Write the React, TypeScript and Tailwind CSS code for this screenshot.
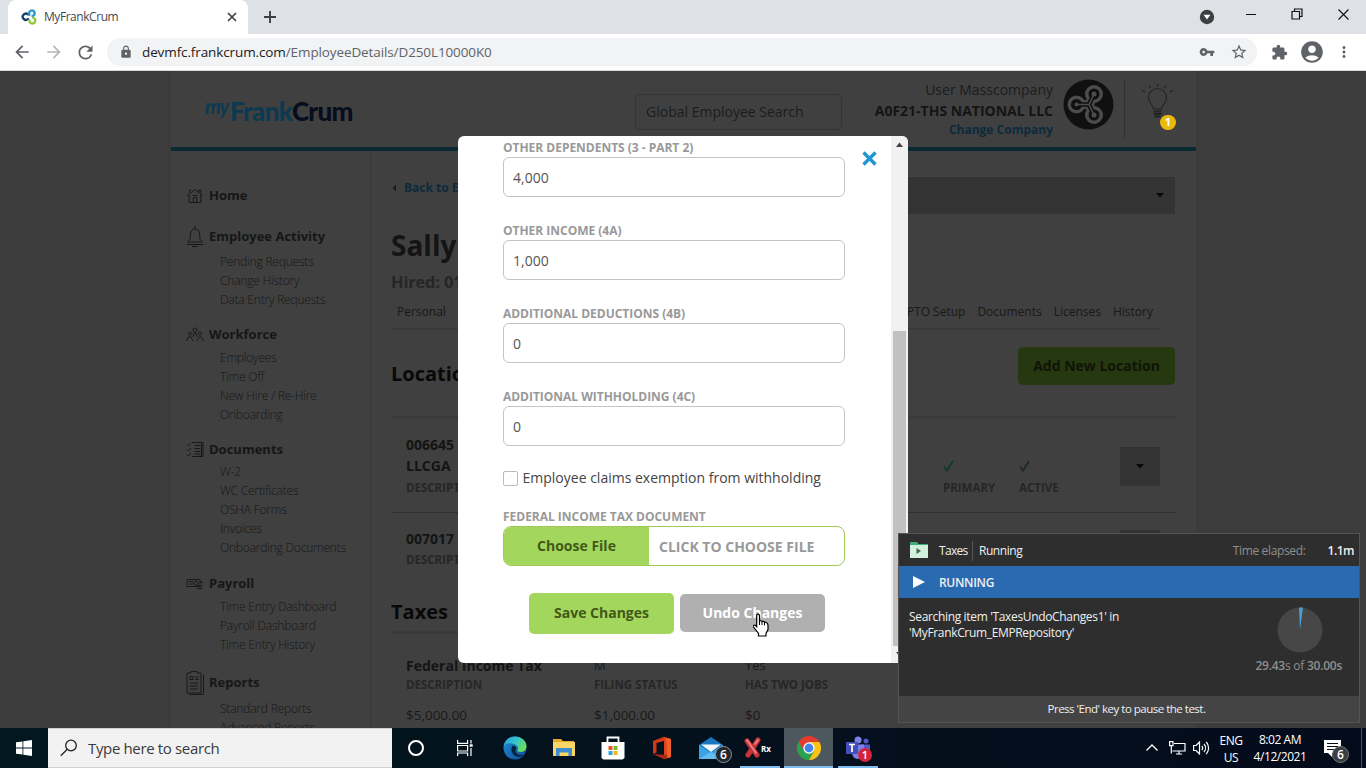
import React from "react";
import {
  MdArrowBack,
  MdArrowForward,
  MdRefresh,
  MdLock,
  MdVpnKey,
  MdStarBorder,
  MdExtension,
  MdAccountCircle,
  MdMoreVert,
} from "react-icons/md";

const sans = "font-['Open_Sans','Noto_Sans',sans-serif]";

function TrefoilLogo({ size, a, b, c }: { size: number; a: string; b: string; c: string }) {
  return (
    <svg width={size} height={size} viewBox="0 0 32 32" fill="none" strokeWidth="4.6" strokeLinecap="round">
      <path d="M14 11 A6.2 6.2 0 1 0 14 20" stroke={a} />
      <path d="M17 11.5 A5.6 5.6 0 1 1 23 14" stroke={b} />
      <path d="M24 17.5 A5.8 5.8 0 1 1 17 23.500" stroke={c} />
    </svg>
  );
}

function TabStrip() {
  return (
    <div className="flex h-[34px] bg-[#dee1e6]">
      <div className="ml-2 flex h-[34px] w-[240px] items-center rounded-t-lg bg-white pr-2">
        <div className="ml-[13px] w-[16px]">
          <TrefoilLogo size={16} a="#17406d" b="#2596d1" c="#8fc93f" />
        </div>
        <span className="ml-[7px] flex-1 text-[12px] tracking-[-0.45px] text-[#45494d]">MyFrankCrum</span>
        <svg width="16" height="16" viewBox="0 0 16 16" stroke="#3c4043" strokeWidth="1.7">
          <path d="M4 4l8 8M12 4l-8 8" />
        </svg>
      </div>
      <svg className="ml-[14px] mt-[9px]" width="16" height="16" viewBox="0 0 16 16" stroke="#3c4043" strokeWidth="1.9">
        <path d="M8 2v12M2 8h12" />
      </svg>
      <div className="flex-1" />
      <svg className="mr-[30px] mt-[9px]" width="16" height="16" viewBox="0 0 16 16">
        <circle cx="8" cy="8" r="7.2" fill="#3c4043" />
        <path d="M4.6 5.8h6.8L8 10.6z" fill="#fff" />
      </svg>
      <svg className="mr-[34px] mt-[9px]" width="12" height="12" viewBox="0 0 12 12" stroke="#111" strokeWidth="1">
        <path d="M1 5.5h10" />
      </svg>
      <svg className="mr-[34px] mt-[8px]" width="12" height="12" viewBox="0 0 12 12" stroke="#111" fill="none" strokeWidth="1.2">
        <path d="M1 3.5h7.5V11H1zM3.5 3.5V1H11v7.5H8.5" />
      </svg>
      <svg className="mr-[16px] mt-[8px]" width="13" height="13" viewBox="0 0 13 13" stroke="#111" strokeWidth="1.1">
        <path d="M1.5 1.5l10 10M11.5 1.5l-10 10" />
      </svg>
    </div>
  );
}

function Toolbar() {
  return (
    <div className="flex h-[37px] items-center border-b border-[#d6d8da] bg-white text-[#5f6368]">
      <MdArrowBack className="ml-[12px]" size={20} />
      <MdArrowForward className="ml-[12px] text-[#b4b7ba]" size={20} />
      <MdRefresh className="ml-[11px]" size={21} />
      <div className="ml-[11px] flex h-7 w-[1150px] items-center rounded-full bg-[#f1f3f4]">
        <MdLock className="ml-[12px]" size={14} />
        <span className="ml-[9px] flex-1 text-[13.500px] tracking-[-0.11px]">
          <span className="text-[#202124]">devmfc.frankcrum.com</span>/EmployeeDetails/D250L10000K0
        </span>
        <MdVpnKey className="mr-[15px]" size={16} />
        <MdStarBorder className="mr-[9px]" size={18} />
      </div>
      <MdExtension className="ml-[14px]" size={17} />
      <MdAccountCircle className="ml-[11px]" size={26} />
      <MdMoreVert className="ml-[10px]" size={18} />
    </div>
  );
}

type Group = { title: string; icon: string; space: string; gap: string; links: string[] };

const groups: Group[] = [
  { title: "Home", icon: "home", space: "mt-[33px]", gap: "", links: [] },
  {
    title: "Employee Activity",
    icon: "bell",
    space: "mt-[17px]",
    gap: "pt-[3px]",
    links: ["Pending Requests", "Change History", "Data Entry Requests"],
  },
  {
    title: "Workforce",
    icon: "people",
    space: "mt-[14px]",
    gap: "pt-px",
    links: ["Employees", "Time Off", "New Hire / Re-Hire", "Onboarding"],
  },
  {
    title: "Documents",
    icon: "docs",
    space: "mt-[14px]",
    gap: "",
    links: ["W-2", "WC Certificates", "OSHA Forms", "Invoices", "Onboarding Documents"],
  },
  {
    title: "Payroll",
    icon: "money",
    space: "mt-[15px]",
    gap: "pt-px",
    links: ["Time Entry Dashboard", "Payroll Dashboard", "Time Entry History"],
  },
  { title: "Reports", icon: "clipboard", space: "mt-[17px]", gap: "pt-[4px]", links: ["Standard Reports", "Advanced Reports"] },
];

const navPaths: Record<string, string> = {
  home: "M1 10L9 3.5l8 6.5M3.2 9v7.500h11.6V9M3.500 6.500V4h2M13 6V4h2v3.6M7.3 16v-4.5h3.4V16M6.5 9.5h5",
  bell: "M9 -1v3M9 2C5.500 2 4.500 5 4.400 8.500c-.1 3.500-1 5-2.900 6.500h15c-1.900-1.500-2.800-3-2.900-6.500C13.500 5 12.500 2 9 2zM0.500 17.500h17M6 19.500h6",
  people: "M9 3a2 2 0 1 0 .01 0M4 7a1.600 1.600 0 1 0 .01 0M14 7a1.600 1.600 0 1 0 .01 0M0.500 16l2-4h2.500l2 4M7 12l1-4h2l1 4M11 16l2-4h2.500l2 4",
  docs: "M6 2.500h11v14H6M8.500 5.500h6M8.500 8.500h6M8.500 11.500h6M8.500 14h6M1 4.500l1.500 1.500L5 3M1 9.500l1.500 1.500L5 8M1 14.500l1.500 1.500L5 13M15.500 3v13",
  money: "M1 5.500h13v7H1zM3 7.500h4M3 10h4M10 7a2 2 0 1 0 .01 0M11 11l4 2 2-2M14 7.500l3 1.500M11 14.500h5",
  clipboard: "M1 0h4V-1.500h6V0h4v20H1zM4 3.500h3v3H4zM9 4h4M9 6.500h4M4 10h8M4 13h8M4 16h8M17.500 1.500v20H3",
};

function NavIcon({ name }: { name: string }) {
  return (
    <svg className="overflow-visible" width="18" height="20" viewBox="0 0 18 20" fill="none" stroke="#181818" strokeWidth="1">
      <path d={navPaths[name]} />
    </svg>
  );
}

function Sidebar() {
  return (
    <div className="h-full w-[200px] border-r border-[#393939] pl-[15px]">
      {groups.map((g) => (
        <div key={g.title} className={g.space}>
          <div className="flex h-6 items-center">
            <NavIcon name={g.icon} />
            <span className="ml-[5px] text-[13px] font-bold text-[#161616]">{g.title}</span>
          </div>
          <div className={g.gap}>
            {g.links.map((l) => (
              <div key={l} className="h-[19px] pl-[34px] text-[12px] leading-[19px] font-light tracking-[-0.2px] whitespace-nowrap text-[#161616]">
                {l}
              </div>
            ))}
          </div>
        </div>
      ))}
    </div>
  );
}

function SiteHeader() {
  return (
    <div className="flex h-[80px] border-b-4 border-[#0b2a33]">
      <div className="flex w-[464px] pl-[34px]">
        <div className="mt-[20px] flex h-[40px] items-center whitespace-nowrap">
          <span className="-mt-[11px] w-[25px] font-['Lato',sans-serif] text-[20px] font-bold italic tracking-[-1px] text-[#0b3a52]">my</span>
          <span className="font-['Lato',sans-serif] text-[26px] font-black tracking-[-0.65px] text-[#0b3a52]">
            Frank<span className="text-[#060d1c]">Crum</span>
          </span>
        </div>
      </div>
      <div className="mt-[23px] h-[36px] w-[207px] rounded-[4px] border border-[#353535] pl-[10px] text-[14px] leading-[34px] text-[#1c1c1c]">
        Global Employee Search
      </div>
      <div className="w-[211px] pt-[8px] text-right whitespace-nowrap">
        <div className="h-[22px] text-[14px] leading-[21px] text-[#1c1c1c]">User Masscompany</div>
        <div className="h-[20px] text-[14px] leading-[20px] font-bold text-[#141414]">A0F21-THS NATIONAL LLC</div>
        <div className="h-[18px] text-[12px] leading-[18px] font-bold text-[#0d2a3d]">Change Company</div>
      </div>
      <svg className="ml-[10px] mt-[8px]" width="51" height="51" viewBox="0 0 51 51">
        <circle cx="25.500" cy="25.500" r="25" fill="#101010" />
        <g stroke="#4c4c4c" fill="#4c4c4c" strokeWidth="9">
          <path d="M13 25.500h13L31 15M26 25.500L31 36" fill="none" strokeLinejoin="round" />
          <circle cx="13.500" cy="25.500" r="9" stroke="none" />
          <circle cx="31" cy="15" r="9" stroke="none" />
          <circle cx="31" cy="36" r="9" stroke="none" />
        </g>
        <g stroke="#101010" fill="#101010" strokeWidth="4.600">
          <path d="M13 25.500h13L31 15M26 25.500L31 36" fill="none" />
          <circle cx="13.500" cy="25.500" r="5.500" stroke="none" />
          <circle cx="31" cy="15" r="5.500" stroke="none" />
          <circle cx="31" cy="36" r="5.500" stroke="none" />
        </g>
        <path d="M13 25.500h13L31 15M26 25.500L31 36" fill="none" stroke="#4c4c4c" strokeWidth="1.600" />
        <g fill="#4c4c4c">
          <circle cx="13.500" cy="25.500" r="2" />
          <circle cx="31" cy="15" r="2.500" />
          <circle cx="31" cy="36" r="2.500" />
        </g>
      </svg>
      <div className="ml-[10px] mt-[9px] h-[58px] w-px bg-[#303030]" />
      <div className="relative ml-[14px] mt-[12px] h-[50px] w-[40px]">
        <svg width="38" height="38" viewBox="0 0 38 38" fill="none" stroke="#222" strokeWidth="1.100">
          <path d="M14.500 26c0-4-5-5.500-5-11.500a9 9 0 0 1 18 0c0 6-5 7.500-5 11.500z" />
          <path d="M14.500 28.500h8M14.500 31h8M15.500 33.500h6" strokeWidth="1.800" />
          <path d="M18.500 1v2.500M10 2.500l1.500 2.500M27 2.500L25.500 5M3 7.500l3 1.500M34 7.500l-3 1.500" />
        </svg>
        <div className="absolute left-[21px] top-[32px] flex h-[15px] w-[16px] items-center justify-center rounded-full bg-[#eab90b] text-[11px] font-bold text-white">
          1
        </div>
      </div>
    </div>
  );
}

function Caret({ cls }: { cls: string }) {
  return (
    <svg className={cls} width="8" height="5" viewBox="0 0 8 5">
      <path d="M0 0h8L4 4.500z" fill="#080808" />
    </svg>
  );
}

function Check({ color }: { color: string }) {
  return (
    <svg width="11" height="12" viewBox="0 0 11 12" fill="none" stroke={color} strokeWidth="1.800">
      <path d="M1 6.500l3 4L10 1" />
    </svg>
  );
}

const muted = "text-[11.5px] font-bold text-[#262626]";

function Details() {
  return (
    <div className="w-[824px] pl-[20px] pr-[20px]">
      <div className="mt-[26px] flex h-[36px] items-start justify-between">
        <div className="flex h-[22px] items-center text-[12px] font-bold text-[#0d2a3d]">
          <svg width="6" height="8" viewBox="0 0 6 8" className="mr-[7px]">
            <path d="M5 0.500v7L1.500 4z" fill="#141d22" />
          </svg>
          Back to Employees
        </div>
        <div className="flex h-[37px] w-[474px] items-center justify-end bg-[#333] pr-[11px]">
          <Caret cls="" />
        </div>
      </div>
      <div className="mt-[12px] h-[40px] text-[28px] leading-[40px] font-bold text-[#141414]">Sally</div>
      <div className="mt-[5px] h-[24px] text-[16.5px] leading-[24px] font-bold tracking-[-0.2px] text-[#262626]">Hired: 01/01/2020</div>
      <div className="mt-[6px] flex h-[30px] w-[769px] items-center justify-between border-b-2 border-[#3a3a3a] pb-[4px] text-[12px] text-[#181818]">
        <span className="pl-[6px]">Personal</span>
        <div className="flex gap-[12px] pr-[7px]">
          <span>PTO Setup</span>
          <span>Documents</span>
          <span>Licenses</span>
          <span>History</span>
        </div>
      </div>
      <div className="mt-[17px] flex h-[38px] items-center justify-between">
        <span className="mt-[16px] text-[20px] font-bold text-[#080808]">Locations</span>
        <div className="flex h-[38px] w-[157px] items-center justify-center rounded-[5px] bg-[#26380f] pb-px text-[14px] font-bold text-[#101408]">
          Add New Location
        </div>
      </div>
      <div className="mt-[31px] h-[3px] bg-[#3a3a3a]" />
      <div className="flex h-[94px] border-b border-[#303030] pl-[15px]">
        <div className="w-[537px] pt-[15px]">
          <div className="h-[21px] text-[14px] leading-[21px] font-bold text-[#141414]">006645</div>
          <div className="h-[23px] text-[14px] leading-[22px] font-bold text-[#141414]">LLCGA</div>
          <div className={`h-[20px] leading-[20px] ${muted}`}>DESCRIPTION</div>
        </div>
        <div className="w-[76px] pt-[41px]">
          <Check color="#0c3a33" />
          <div className={`mt-[6px] h-[20px] leading-[20px] ${muted}`}>PRIMARY</div>
        </div>
        <div className="w-[101px] pt-[41px]">
          <Check color="#1c2a28" />
          <div className={`mt-[6px] h-[20px] leading-[20px] ${muted}`}>ACTIVE</div>
        </div>
        <div className="mt-[28px] flex h-[39px] w-[40px] items-center justify-center bg-[#333]">
          <Caret cls="" />
        </div>
      </div>
      <div className="flex h-[73px] justify-between pl-[15px] pr-[15px]">
        <div className="pt-[14px]">
          <div className="h-[23px] text-[14px] leading-[23px] font-bold text-[#141414]">007017</div>
          <div className={`h-[20px] leading-[20px] ${muted}`}>DESCRIPTION</div>
        </div>
        <div className="mt-[17px] h-[39px] w-[40px] bg-[#333]" />
      </div>
      <div className="mt-[11px] h-[30px] text-[20px] leading-[30px] font-bold text-[#080808]">Taxes</div>
      <div className="mt-[4px] h-[3px] bg-[#3a3a3a]" />
      <div className="grid grid-cols-[188px_151px_1fr] pl-[15px] pt-[22px]">
        <span className="h-[19px] text-[14px] leading-[19px] font-bold text-[#141414]">Federal Income Tax</span>
        <span className="h-[19px] text-[13px] leading-[19px] text-[#1a1a1a]">M</span>
        <span className="h-[19px] text-[13px] leading-[19px] text-[#1a1a1a]">Yes</span>
        <span className={`h-[20px] leading-[20px] ${muted}`}>DESCRIPTION</span>
        <span className={`h-[20px] leading-[20px] ${muted}`}>FILING STATUS</span>
        <span className={`h-[20px] leading-[20px] ${muted}`}>HAS TWO JOBS</span>
        <span className="mt-[10px] h-[20px] text-[13.5px] leading-[20px] text-[#1a1a1a]">$5,000.00</span>
        <span className="mt-[10px] h-[20px] text-[13.5px] leading-[20px] text-[#1a1a1a]">$1,000.00</span>
        <span className="mt-[10px] h-[20px] text-[13.5px] leading-[20px] text-[#1a1a1a]">$0</span>
      </div>
    </div>
  );
}

const fields = [
  { label: "OTHER DEPENDENTS (3 - PART 2)", value: "4,000" },
  { label: "OTHER INCOME (4A)", value: "1,000" },
  { label: "ADDITIONAL DEDUCTIONS (4B)", value: "0" },
  { label: "ADDITIONAL WITHHOLDING (4C)", value: "0" },
];

const labelCls = "h-[18px] text-[12px] leading-[18px] font-bold tracking-[-0.02px] whitespace-nowrap text-[#999]";

function HandCursor() {
  return (
    <svg className="absolute left-[73px] top-[19px]" width="18" height="24" viewBox="0 0 18 24">
      <path
        d="M4 1.500c1.200-.8 2.500 0 2.500 1.200V8c.8-.6 2.200-.3 2.500.6.800-.5 2.200-.2 2.500.8 1-.5 2.800.2 2.900 1.300l.6 1.300v4.500l-2 4v2.500H5.500V20.500l-5-6.500c-.8-1.300.6-2.500 1.800-1.700l1.400 1.400V2.700z"
        fill="#fff"
        stroke="#000"
        strokeWidth="1.200"
      />
      <path d="M6.500 8v4M9 8.600V12M11.500 9.400V12.500" stroke="#000" strokeWidth="1" />
    </svg>
  );
}

function Modal() {
  return (
    <div className="absolute left-[458px] top-[65px] flex h-[527px] w-[450px] overflow-hidden rounded-[6px] bg-white">
      <div className="w-[387px] pl-[45px] pt-[3px]">
        {fields.map((f) => (
          <div key={f.label} className="h-[83px]">
            <div className={labelCls}>{f.label}</div>
            <div className="h-[40px] w-[342px] rounded-[6px] border border-[#c4c4c4] pl-[9px] text-[14px] leading-[40px] text-[#555]">
              {f.value}
            </div>
          </div>
        ))}
        <div className="-mt-[3px] flex h-[20px] items-center">
          <div className="mt-px h-[15px] w-[15px] rounded-[2px] border border-[#bbb]" />
          <span className="-mt-px ml-[4.5px] text-[14px] whitespace-nowrap text-[#444]">Employee claims exemption from withholding</span>
        </div>
        <div className={`mt-[20px] ${labelCls}`}>FEDERAL INCOME TAX DOCUMENT</div>
        <div className="flex h-[40px] w-[342px] items-center overflow-hidden rounded-[8px] border border-[#a3c757] text-[14px] font-bold">
          <div className="flex h-[40px] w-[145px] items-center justify-center bg-[#a3d65c] pb-[2px] text-[#42591a]">Choose File</div>
          <span className="ml-[10px] text-[14px] text-[#999]">CLICK TO CHOOSE FILE</span>
        </div>
        <div className="ml-[26px] mt-[27px] flex items-start gap-[6px] text-[14px] font-bold">
          <div className="flex h-[41px] w-[145px] items-center justify-center rounded-[5px] bg-[#a3d65c] pb-[2px] text-[#42591a]">
            Save Changes
          </div>
          <div className="relative mt-px flex h-[38px] w-[145px] items-center justify-center rounded-[5px] bg-[#b0b0b0] pb-px text-white">
            Undo Changes
            <HandCursor />
          </div>
        </div>
      </div>
      <div className="flex w-[46px] justify-center pl-[3px] pt-[15px]">
        <svg width="15" height="15" viewBox="0 0 15 15" stroke="#2196d3" strokeWidth="3.400">
          <path d="M1.500 1.500l12 12M13.500 1.500l-12 12" />
        </svg>
      </div>
      <div className="flex w-[17px] flex-col items-center bg-[#f1f1f1]">
        <svg className="mt-[6px] shrink-0" width="7" height="5" viewBox="0 0 7 5">
          <path d="M0 5h7L3.500 0.500z" fill="#444" />
        </svg>
        <div className="mt-[184px] h-[315px] w-[13px] bg-[#c1c1c1]" />
        <svg className="mt-[6px] shrink-0" width="7" height="5" viewBox="0 0 7 5">
          <path d="M0 0h7L3.500 4.500z" fill="#444" />
        </svg>
      </div>
    </div>
  );
}

function RunnerPanel() {
  return (
    <div className="absolute left-[898px] top-[462px] flex h-[190px] w-[462px] flex-col border border-[#545454] bg-[#2e2e2e] text-[12px] text-[#f0f0f0]">
      <div className="flex h-[32px] items-center pt-[2px]">
        <svg className="-mt-[2px] ml-[11px]" width="18" height="18" viewBox="0 0 18 18">
          <path d="M0 1h7l1.500 2H18v14H0z" fill="#3fae79" />
          <path d="M0 4h18v13H0z" fill="#d3efdd" />
          <path d="M6.500 7v6l4.500-3z" fill="#3a6b52" />
        </svg>
        <span className="ml-[11px] w-[29px] tracking-[-0.7px]">Taxes</span>
        <div className="ml-[4px] h-[20px] w-px bg-[#555]" />
        <span className="ml-[6px] tracking-[-0.45px]">Running</span>
        <span className="ml-auto tracking-[-0.35px] text-[#8f8f8f]">Time elapsed:</span>
        <span className="mr-[5px] ml-[22px] font-semibold tracking-[-0.5px]">1.1m</span>
      </div>
      <div className="flex h-[32px] items-center bg-[#2a6ab0]">
        <svg className="ml-[14px]" width="12" height="12" viewBox="0 0 12 12">
          <path d="M0 0l12 6L0 12z" fill="#fff" />
        </svg>
        <span className="ml-[14px] pt-px font-semibold tracking-[-0.3px]">RUNNING</span>
      </div>
      <div className="flex flex-1 justify-between">
        <div className="pl-[10px] pt-[11px] leading-[16px] tracking-[-0.34px]">
          Searching item 'TaxesUndoChanges1' in
          <br />
          'MyFrankCrum_EMPRepository'
        </div>
        <div className="mr-[17px] flex flex-col items-center pt-[9px]">
          <svg className="ml-[2px]" width="46" height="46" viewBox="0 0 46 46">
            <circle cx="23" cy="23" r="22.500" fill="#474747" />
            <path d="M23 23L22 0.500h4z" fill="#4f9bd3" />
          </svg>
          <span className="mt-[4px] tracking-[-0.25px] text-[#8f8f8f]">
            <b className="font-semibold">29.43</b>s of <b className="font-semibold">30.00s</b>
          </span>
        </div>
      </div>
      <div className="flex h-[26px] items-center justify-center bg-[#444] pr-[5px] text-[11.5px] tracking-[-0.5px]">
        Press 'End' key to pause the test.
      </div>
    </div>
  );
}

function Slot({ children, state }: { children: React.ReactNode; state?: string }) {
  return (
    <div className={`relative flex h-[40px] w-[49px] items-center justify-center ${state === "active" ? "bg-[#4d575e]" : ""}`}>
      {children}
      {state && <div className={`absolute bottom-0 h-[2px] bg-[#7cbcf0] ${state === "active" ? "w-[49px]" : "w-[40px]"}`} />}
    </div>
  );
}

function Taskbar() {
  return (
    <div className="flex h-[40px] bg-linear-to-r from-[#02171f] to-[#040b1b] text-white">
      <div className="flex w-[48px] items-center justify-center">
        <svg width="16" height="16" viewBox="0 0 16 16" fill="#fff">
          <path d="M0 2.300l6.500-.9v6.200H0zM7.300 1.300L16 0v7.600H7.300zM0 8.400h6.500v6.200L0 13.700zM7.300 8.400H16V16l-8.700-1.300z" />
        </svg>
      </div>
      <div className="flex w-[344px] items-center border-y border-[#d0d0d0] bg-[#f2f2f2]">
        <svg className="ml-[12px]" width="18" height="18" viewBox="0 0 18 18" fill="none" stroke="#222" strokeWidth="1.300">
          <circle cx="11" cy="6.500" r="5.300" />
          <path d="M7 10.500L0.800 16.800" />
        </svg>
        <span className="ml-[10px] text-[15px] tracking-[-0.35px] text-[#3a3a3a]">Type here to search</span>
      </div>
      <div className="flex w-[48px] items-center justify-center">
        <div className="h-[16px] w-[16px] rounded-full border-2 border-white" />
      </div>
      <div className="mr-px">
        <Slot>
          <svg width="16" height="16" viewBox="0 0 16 16" fill="none" stroke="#fff" strokeWidth="1.200">
            <path d="M0.600 0v3.400h10V0M0.600 5.500h10v5.500h-10zM0.600 16v-3h10v3M14 0v3.500M14 8v8" />
            <path d="M12.700 5.500h3" strokeWidth="2.400" />
          </svg>
        </Slot>
      </div>
      <Slot>
        <svg width="24" height="24" viewBox="0 0 24 24">
          <defs>
            <linearGradient id="edgeTop" x1="0" y1="0" x2="1" y2="0.500">
              <stop offset="0" stopColor="#2a9be0" />
              <stop offset="0.550" stopColor="#35c5c8" />
              <stop offset="1" stopColor="#6ade5a" />
            </linearGradient>
            <linearGradient id="edgeLow" x1="0" y1="0" x2="1" y2="1">
              <stop offset="0" stopColor="#1f8fdc" />
              <stop offset="1" stopColor="#114a8c" />
            </linearGradient>
          </defs>
          <circle cx="12" cy="12" r="11.500" fill="url(#edgeLow)" />
          <path d="M0.700 10C2 4 6.500.500 12 .500c6.500 0 11.500 4.500 11.500 9.800 0 3.700-2.800 5.700-5.800 5.700-3 0-3.700-1.200-3.200-2 .9-1.300.7-2.500-.3-3.700C12 7.500 4.500 5.500.700 10z" fill="url(#edgeTop)" />
          <path d="M9 10.500c-2 4.500 1 9.800 6.500 10.300 2.500.2 4.700-.8 6.300-2.300-3 1.300-7 .8-8.800-1.700-1.300-2 .2-3.300.2-4.800 0-1.200-2.700-3.500-4.200-1.500z" fill="#04233f" />
        </svg>
      </Slot>
      <Slot>
        <svg width="22" height="20" viewBox="0 0 22 20">
          <path d="M0 1h8l2 2h11v5H0z" fill="#e7a92b" />
          <path d="M0 4h22v14H0z" fill="#fbd667" />
          <path d="M3 10h16v8h-3.500v-3.500h-9V18H3z" fill="#3d8ed0" />
        </svg>
      </Slot>
      <Slot>
        <svg width="24" height="24" viewBox="0 0 24 24">
          <path d="M6.500 6V1.500h11V6" fill="none" stroke="#fff" strokeWidth="1.800" />
          <path d="M.5 6h23v16l-2 1.500h-19L.500 22z" fill="#fff" />
          <path d="M7.500 10h4v4h-4z" fill="#e8552b" />
          <path d="M12.500 10h4v4h-4z" fill="#7fb92c" />
          <path d="M7.500 15h4v4h-4z" fill="#2aa4e0" />
          <path d="M12.500 15h4v4h-4z" fill="#f6b61e" />
        </svg>
      </Slot>
      <Slot>
        <svg width="20" height="24" viewBox="0 0 20 24">
          <path d="M12 .800L19 3v18l-7 2.300z" fill="#e2401c" />
          <path d="M12 .800L1 5v13l3.500-1.500V7L12 5z" fill="#d4371a" />
          <path d="M1 18l11 5.300 3-1V19z" fill="#a92a12" />
          <path d="M14 2l5 1v18l-3.500 1z" fill="#f0602c" />
        </svg>
      </Slot>
      <Slot>
        <svg width="24" height="22" viewBox="0 0 24 22">
          <path d="M0 8L12 0l12 8v14H0z" fill="#1a78c2" />
          <path d="M2 7.500h20L12 15z" fill="#f4f8fb" />
          <path d="M0 8l12 8L24 8v14H0z" fill="#3ba3e4" />
          <path d="M0 22l12-7 12 7z" fill="#61bdf0" />
        </svg>
        <div className="absolute left-[29px] top-[18px] flex h-[17px] w-[17px] items-center justify-center rounded-full border border-[#8b9298] bg-[#20272c] text-[12px] font-semibold">
          6
        </div>
      </Slot>
      <Slot state="open">
        <svg width="20" height="22" viewBox="0 0 20 22" className="-ml-[14px]">
          <path d="M4 4l10 14M15 3L5 18" stroke="#c9343a" strokeWidth="5" strokeLinecap="round" />
          <path d="M4 3l9 13M15 3l-3 4" stroke="#f08a86" strokeWidth="1.600" strokeLinecap="round" />
        </svg>
        <span className="absolute left-[26px] top-[16px] text-[8px] leading-[9px] font-bold">Rx</span>
      </Slot>
      <Slot state="active">
        <svg width="24" height="24" viewBox="0 0 24 24">
          <path d="M12 12L1.600 6A12 12 0 0 1 22.400 6z" fill="#e33b2e" />
          <path d="M12 12L22.400 6A12 12 0 0 1 12 24z" fill="#fbc116" />
          <path d="M12 12v12A12 12 0 0 1 1.600 6z" fill="#2ba24c" />
          <path d="M12 6h10.400L17 15z" fill="#fbc116" />
          <path d="M6.800 15L1.600 6 12 6z" fill="#e33b2e" />
          <path d="M6.800 15l-5.200-9 2.500 12L12 24l5.200-9z" fill="#2ba24c" />
          <circle cx="12" cy="12" r="5.700" fill="#fff" />
          <circle cx="12" cy="12" r="4.400" fill="#4384ee" />
        </svg>
      </Slot>
      <Slot state="open">
        <svg width="24" height="24" viewBox="0 0 24 24">
          <circle cx="12" cy="4" r="3.500" fill="#7b83eb" />
          <circle cx="20" cy="5" r="2.500" fill="#5059c9" />
          <path d="M15 8.500h9V15a4.500 4.500 0 0 1-7 3z" fill="#5059c9" />
          <path d="M6 8.500h12V17a6 6 0 0 1-12 0z" fill="#7b83eb" />
          <path d="M0 6h12v12H0z" fill="#464eb8" />
          <path d="M3 8.500h6M6 8.500V16" stroke="#fff" strokeWidth="1.700" />
        </svg>
        <div className="absolute left-[25px] top-[20px] flex h-[14px] w-[14px] items-center justify-center rounded-full bg-[#d3243b] text-[11px] font-semibold">
          1
        </div>
      </Slot>
      <div className="flex-1" />
      <svg className="mr-[11px] mt-[13px]" width="12" height="14" viewBox="0 0 12 14" fill="none" stroke="#fff" strokeWidth="1.300">
        <path d="M0.500 9.500L6 4l5.500 5.500" />
      </svg>
      <svg className="mr-[7px] mt-[13px]" width="17" height="14" viewBox="0 0 17 14" fill="none" stroke="#fff" strokeWidth="1.200">
        <path d="M5 2.500h11v7.500H3.500M0.600 0.600H4v4H0.600zM2.300 4.600V12.500M7 13h6M10 10v3" />
      </svg>
      <svg className="mr-[9px] mt-[13px]" width="17" height="14" viewBox="0 0 17 14" fill="none" stroke="#fff" strokeWidth="1.200">
        <path d="M0.600 4.500h2.500L6.500 1v12L3.100 9.500H0.600zM8.800 5a3 3 0 0 1 0 4M11 3a6 6 0 0 1 0 8M13.300 1a9 9 0 0 1 0 12" />
      </svg>
      <div className="w-[24px] pt-[4px] text-center text-[12px] leading-[17px] tracking-[-0.5px]">
        ENG
        <br />
        US
      </div>
      <div className="ml-[8px] mr-px w-[58px] pt-[3px] text-center text-[12px] leading-[17px] tracking-[-0.45px] whitespace-nowrap">
        8:02 AM
        <br />
        4/12/2021
      </div>
      <div className="relative ml-[14px] mr-[9px] w-[28px] pt-[12px]">
        <svg width="17" height="17" viewBox="0 0 17 17">
          <path d="M0 0h17v13H8v4l-4-4H0z" fill="#fff" />
          <path d="M3 3.500h11M3 6.500h11M3 9.500h7" stroke="#06101c" strokeWidth="1.200" />
        </svg>
        <div className="absolute left-[8px] top-[18px] flex h-[17px] w-[17px] items-center justify-center rounded-full border border-[#777] bg-[#3a3d42] text-[12px] font-semibold">
          6
        </div>
      </div>
      <div className="mr-[4px] w-px bg-[#4a505c]" />
    </div>
  );
}

export default function App() {
  return (
    <div className={`h-[768px] w-[1366px] overflow-hidden bg-[#3c3c3c] ${sans}`}>
      <TabStrip />
      <Toolbar />
      <div className="relative h-[657px] overflow-hidden">
        <div className="ml-[170px] h-full w-[1027px] border-x border-[#3a3a3a] bg-[#404040]">
          <SiteHeader />
          <div className="flex h-[577px]">
            <Sidebar />
            <Details />
          </div>
        </div>
        <Modal />
        <RunnerPanel />
      </div>
      <Taskbar />
    </div>
  );
}
